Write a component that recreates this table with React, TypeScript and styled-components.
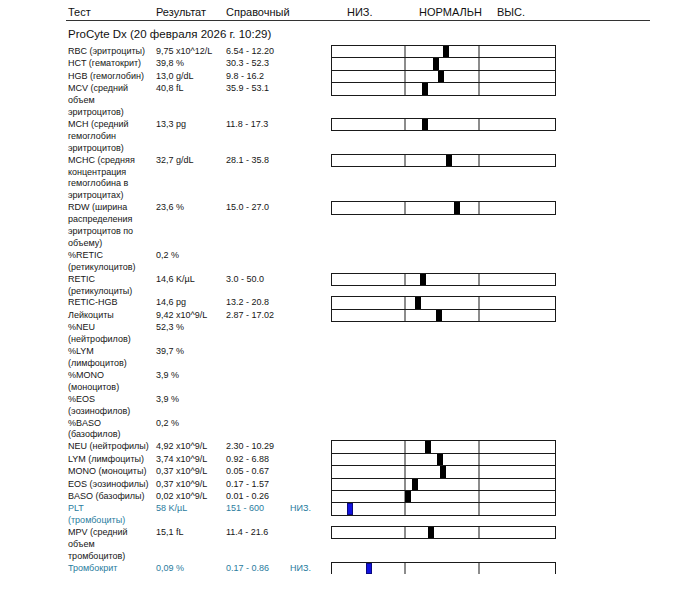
import React from "react";
import styled, { createGlobalStyle } from "styled-components";

const GlobalStyle = createGlobalStyle`
  html, body {
    margin: 0;
    padding: 0;
    background: #ffffff;
  }
  body {
    font-family: "Liberation Sans", Arial, "Noto Sans", sans-serif;
    color: #1a1a1a;
  }
`;

const Page = styled.div`
  width: 584px;
  padding-left: 66px;
`;

const HeaderRow = styled.div`
  display: grid;
  grid-template-columns: 88px 70px 121px 72px 78px 1fr;
  padding: 6px 0 1px 2px;
  border-bottom: 1px solid #333333;
  font-size: 11px;
  line-height: 13px;
  color: #111111;
`;

const Title = styled.div`
  margin: 6px 0 4px 2px;
  font-size: 11.5px;
  line-height: 14px;
  color: #111111;
`;

const Table = styled.div`
  display: flex;
  flex-direction: column;
  padding-left: 2px;
`;

const Row = styled.div<{ $low?: boolean }>`
  display: grid;
  grid-template-columns: 88px 70px 64px 41px 225px;
  align-items: start;
  min-height: 12.4px;
  font-size: 9px;
  line-height: 11.9px;
  color: ${(p) => (p.$low ? "#2a7c9e" : "#161616")};
`;

const Cell = styled.div`
  white-space: nowrap;
  margin-top: 1px;
  margin-bottom: -1px;
`;

const Line = styled.div`
  white-space: nowrap;
`;

const Bar = styled.div`
  position: relative;
  box-sizing: border-box;
  height: 13.4px;
  margin-bottom: -1px;
  border: 1px solid #1a1a1a;
  display: grid;
  grid-template-columns: 74px 74px 1fr;
`;

const Segment = styled.div<{ $divider?: boolean }>`
  border-right: ${(p) => (p.$divider ? "2px solid #8c8c8c" : "none")};
`;

const Marker = styled.span<{ $low?: boolean }>`
  position: absolute;
  top: 0;
  bottom: 0;
  width: 6px;
  box-sizing: border-box;
  background: ${(p) => (p.$low ? "#1212e0" : "#000000")};
  border: ${(p) => (p.$low ? "1px solid #0a0a80" : "none")};
`;

type Item = {
  name: string[];
  result: string;
  ref?: string;
  flag?: string;
  pos?: number;
  low?: boolean;
};

const items: Item[] = [
  { name: ["RBC (эритроциты)"], result: "9,75 x10^12/L", ref: "6.54 - 12.20", pos: 115.3 },
  { name: ["HCT (гематокрит)"], result: "39,8 %", ref: "30.3 - 52.3", pos: 105 },
  { name: ["HGB (гемоглобин)"], result: "13,0 g/dL", ref: "9.8 - 16.2", pos: 110 },
  { name: ["MCV (средний", "объем", "эритроцитов)"], result: "40,8 fL", ref: "35.9 - 53.1", pos: 94 },
  { name: ["MCH (средний", "гемоглобин", "эритроцитов)"], result: "13,3 pg", ref: "11.8 - 17.3", pos: 93.5 },
  {
    name: ["MCHC (средняя", "концентрация", "гемоглобина в", "эритроцитах)"],
    result: "32,7 g/dL",
    ref: "28.1 - 35.8",
    pos: 117.5,
  },
  {
    name: ["RDW (ширина", "распределения", "эритроцитов по", "объему)"],
    result: "23,6 %",
    ref: "15.0 - 27.0",
    pos: 126.3,
  },
  { name: ["%RETIC", "(ретикулоцитов)"], result: "0,2 %" },
  { name: ["RETIC", "(ретикулоциты)"], result: "14,6 K/µL", ref: "3.0 - 50.0", pos: 91.6 },
  { name: ["RETIC-HGB"], result: "14,6 pg", ref: "13.2 - 20.8", pos: 87 },
  { name: ["Лейкоциты"], result: "9,42 x10^9/L", ref: "2.87 - 17.02", pos: 107.6 },
  { name: ["%NEU", "(нейтрофилов)"], result: "52,3 %" },
  { name: ["%LYM", "(лимфоцитов)"], result: "39,7 %" },
  { name: ["%MONO", "(моноцитов)"], result: "3,9 %" },
  { name: ["%EOS", "(эозинофилов)"], result: "3,9 %" },
  { name: ["%BASO", "(базофилов)"], result: "0,2 %" },
  { name: ["NEU (нейтрофилы)"], result: "4,92 x10^9/L", ref: "2.30 - 10.29", pos: 97.3 },
  { name: ["LYM (лимфоциты)"], result: "3,74 x10^9/L", ref: "0.92 - 6.88", pos: 108.7 },
  { name: ["MONO (моноциты)"], result: "0,37 x10^9/L", ref: "0.05 - 0.67", pos: 112 },
  { name: ["EOS (эозинофилы)"], result: "0,37 x10^9/L", ref: "0.17 - 1.57", pos: 84 },
  { name: ["BASO (базофилы)"], result: "0,02 x10^9/L", ref: "0.01 - 0.26", pos: 77 },
  {
    name: ["PLT", "(тромбоциты)"],
    result: "58 K/µL",
    ref: "151 - 600",
    flag: "НИЗ.",
    pos: 18.7,
    low: true,
  },
  { name: ["MPV (средний", "объем", "тромбоцитов)"], result: "15,1 fL", ref: "11.4 - 21.6", pos: 99.7 },
  { name: ["Тромбокрит"], result: "0,09 %", ref: "0.17 - 0.86", flag: "НИЗ.", pos: 38, low: true },
];

function RangeBar({ pos, low }: { pos: number; low?: boolean }) {
  return (
    <Bar>
      <Segment $divider />
      <Segment $divider />
      <Segment />
      <Marker $low={low} style={{ left: `${pos - 4}px` }} />
    </Bar>
  );
}

export default function App() {
  return (
    <>
      <GlobalStyle />
      <Page>
        <HeaderRow>
          <span>Тест</span>
          <span>Результат</span>
          <span>Справочный</span>
          <span>НИЗ.</span>
          <span>НОРМАЛЬН</span>
          <span>ВЫС.</span>
        </HeaderRow>
        <Title>ProCyte Dx (20 февраля 2026 г. 10:29)</Title>
        <Table>
          {items.map((it, i) => (
            <Row key={i} $low={it.low}>
              <Cell>
                {it.name.map((l, j) => (
                  <Line key={j}>{l}</Line>
                ))}
              </Cell>
              <Cell>{it.result}</Cell>
              <Cell>{it.ref ?? ""}</Cell>
              <Cell>{it.flag ?? ""}</Cell>
              <div>{it.pos !== undefined && <RangeBar pos={it.pos} low={it.low} />}</div>
            </Row>
          ))}
        </Table>
      </Page>
    </>
  );
}
